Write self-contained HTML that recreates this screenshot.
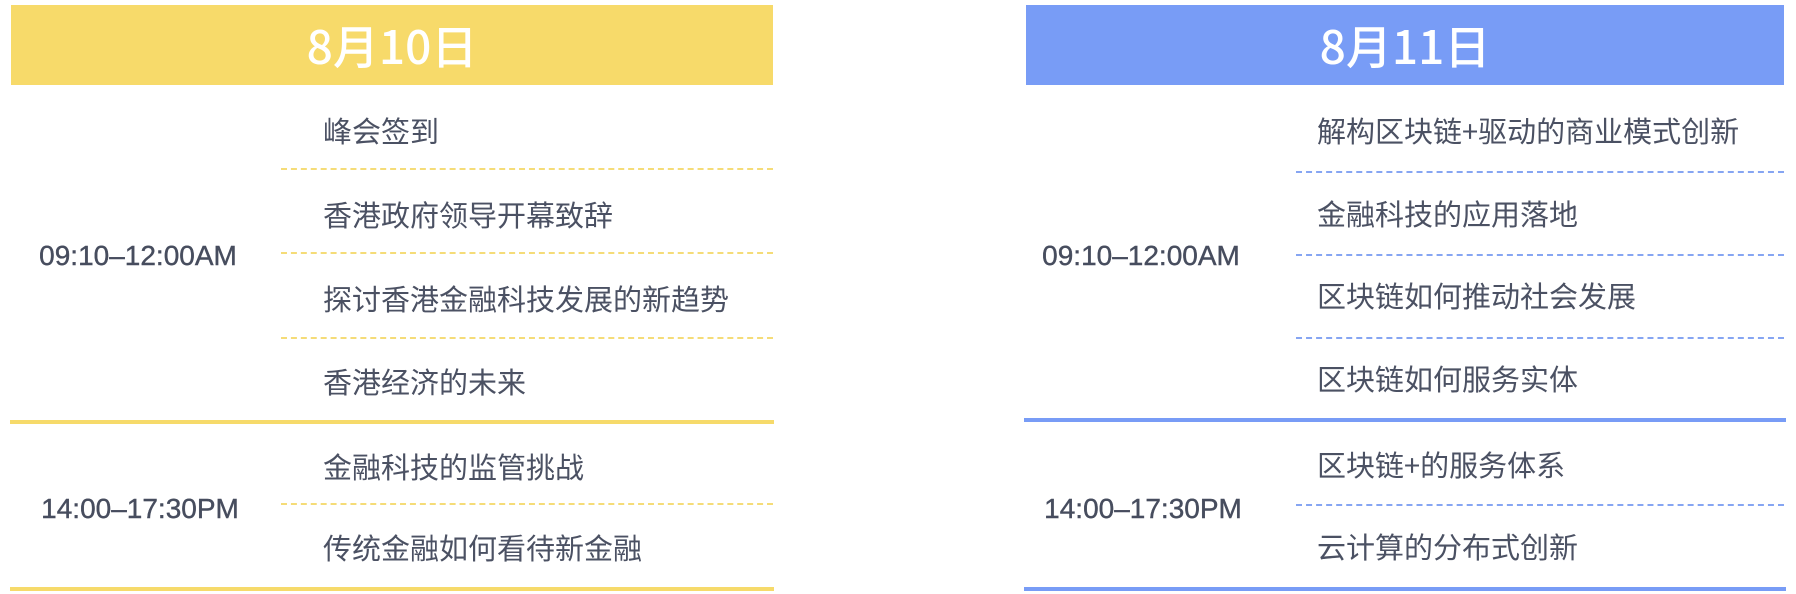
<!DOCTYPE html>
<html><head><meta charset="utf-8"><style>
body{margin:0;width:1796px;height:594px;background:#fff;position:relative;overflow:hidden;font-family:"Liberation Sans","Noto Sans CJK SC",sans-serif;color:#4b5163}
div{position:absolute}
.h{height:80px;top:5px;color:#fff;font-size:46px;text-align:center;line-height:80px;font-family:"Noto Sans CJK SC",sans-serif;font-weight:500}
.t{font-size:29px;line-height:34px;white-space:nowrap;font-family:"Noto Sans CJK SC",sans-serif}
.tm{font-size:28px;line-height:34px;width:300px;text-align:center;white-space:nowrap;color:#474d5e;-webkit-text-stroke:0.4px #474d5e}
.dy{height:0;border-top:2px dashed #f5dc78}
.db{height:0;border-top:2px dashed #86a5f2}
.sy{height:4px;background:#f6da6a}
.sb{height:4px;background:#789cf6}
</style></head><body>
<div class="h" style="left:11px;width:762px;background:#f7da6a">8月10日</div>
<div class="t" style="left:323px;top:113px">峰会签到</div>
<div class="dy" style="left:281px;width:492px;top:168px"></div>
<div class="t" style="left:323px;top:197px">香港政府领导开幕致辞</div>
<div class="dy" style="left:281px;width:492px;top:252px"></div>
<div class="t" style="left:323px;top:281px">探讨香港金融科技发展的新趋势</div>
<div class="dy" style="left:281px;width:492px;top:337px"></div>
<div class="t" style="left:323px;top:364px">香港经济的未来</div>
<div class="tm" style="left:-12px;top:239px">09:10–12:00AM</div>
<div class="sy" style="left:10px;width:764px;top:420px"></div>
<div class="t" style="left:323px;top:449px">金融科技的监管挑战</div>
<div class="dy" style="left:281px;width:492px;top:503px"></div>
<div class="t" style="left:323px;top:530px">传统金融如何看待新金融</div>
<div class="tm" style="left:-10px;top:492px">14:00–17:30PM</div>
<div class="sy" style="left:10px;width:764px;top:587px"></div>

<div class="h" style="left:1026px;width:758px;background:#789cf6">8月11日</div>
<div class="t" style="left:1317px;top:113px">解构区块链+驱动的商业模式创新</div>
<div class="db" style="left:1296px;width:488px;top:171px"></div>
<div class="t" style="left:1317px;top:196px">金融科技的应用落地</div>
<div class="db" style="left:1296px;width:488px;top:254px"></div>
<div class="t" style="left:1317px;top:278px">区块链如何推动社会发展</div>
<div class="db" style="left:1296px;width:488px;top:337px"></div>
<div class="t" style="left:1317px;top:361px">区块链如何服务实体</div>
<div class="tm" style="left:991px;top:239px">09:10–12:00AM</div>
<div class="sb" style="left:1024px;width:762px;top:418px"></div>
<div class="t" style="left:1317px;top:447px">区块链+的服务体系</div>
<div class="db" style="left:1296px;width:488px;top:504px"></div>
<div class="t" style="left:1317px;top:529px">云计算的分布式创新</div>
<div class="tm" style="left:993px;top:492px">14:00–17:30PM</div>
<div class="sb" style="left:1024px;width:762px;top:587px"></div>
</body></html>
